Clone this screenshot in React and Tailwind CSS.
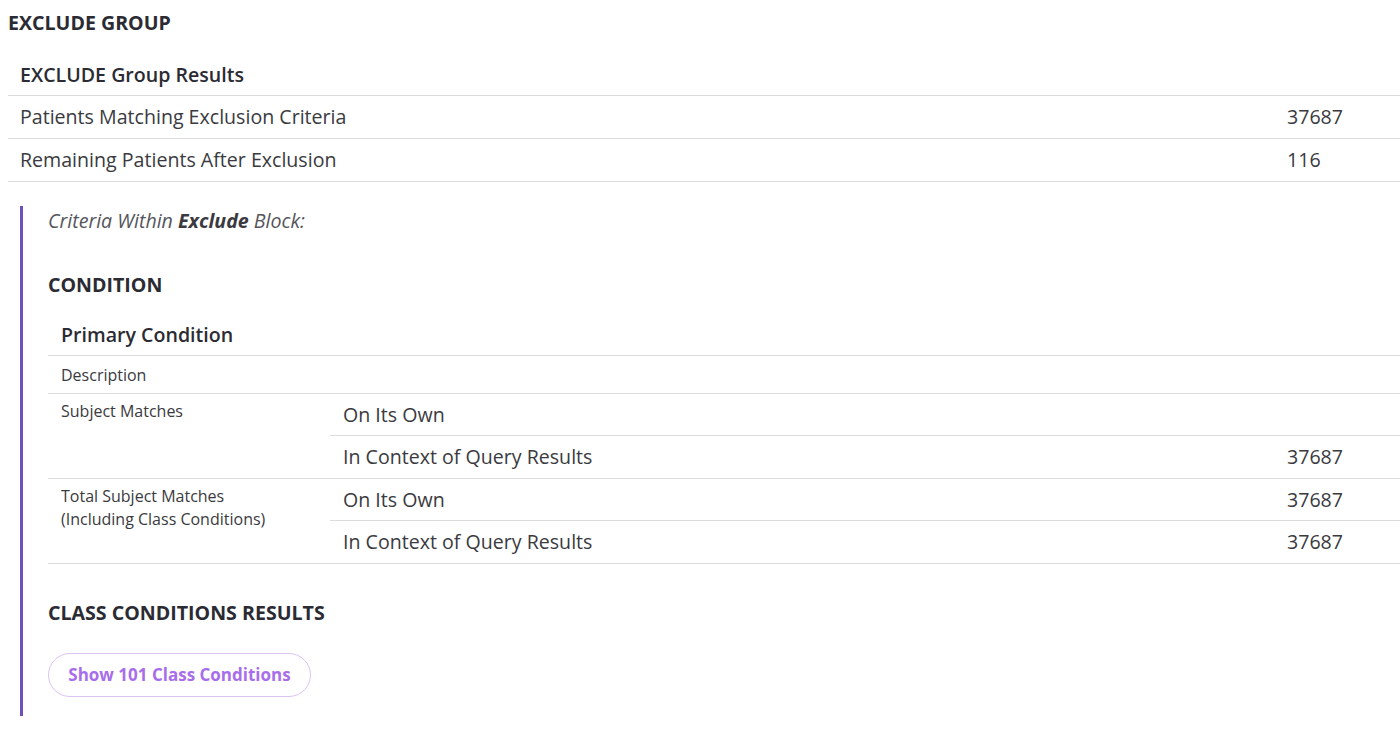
import React from "react";

const F = { fontFamily: '"Open Sans", "Liberation Sans", sans-serif' };

function Row({ label, value }) {
  return (
    <div className="flex items-center border-b border-[#dcdcdc] h-[43px]">
      <div className="flex-1 pl-3 text-[19.6px] text-[#3a3a40]">{label}</div>
      <div className="w-[125px] pl-3 text-[19.6px] text-[#3a3a40]">{value}</div>
    </div>
  );
}

function SubRow({ label, value, last }) {
  return (
    <div className={"flex items-center h-[42px] " + (last ? "" : "border-b border-[#dcdcdc]")}>
      <div className="flex-1 pl-[13px] text-[19.6px] text-[#3a3a40]">{label}</div>
      <div className="w-[126px] pl-[13px] text-[19.6px] text-[#3a3a40]">{value}</div>
    </div>
  );
}

export default function App() {
  return (
    <div style={F} className="bg-white w-[1400px] min-h-[732px] pl-2 pt-[9px] text-[#3a3a40]">
      <h2 className="text-[19.6px] font-bold leading-[28px] text-[#2b2b33]">EXCLUDE GROUP</h2>

      <div className="mt-[17px]">
        <div className="flex items-center border-b border-[#dcdcdc] h-[42px]">
          <div className="pl-3 text-[19.6px] font-semibold text-[#2b2b33]">EXCLUDE Group Results</div>
        </div>
        <Row label="Patients Matching Exclusion Criteria" value="37687" />
        <Row label="Remaining Patients After Exclusion" value="116" />
      </div>

      <div className="ml-3 mt-[24px] border-l-[3px] border-[#6e50bd] pl-[25px] pt-[2px] pb-[19px]">
        <p className="text-[19.6px] italic leading-[26px] text-[#55555c]">
          Criteria Within <span className="font-bold text-[#3a3a40]">Exclude</span> Block:
        </p>

        <h3 className="mt-[37px] text-[19.6px] font-bold leading-[28px] text-[#2b2b33]">CONDITION</h3>

        <div className="mt-[15px]">
          <div className="flex items-center border-b border-[#dcdcdc] h-[42px]">
            <div className="pl-[13px] text-[19.6px] font-semibold text-[#2b2b33]">Primary Condition</div>
          </div>
          <div className="flex items-center border-b border-[#dcdcdc] h-[38px]">
            <div className="pl-[13px] text-[16px] text-[#3a3a40]">Description</div>
          </div>
          <div className="flex border-b border-[#dcdcdc]">
            <div className="w-[282px] pl-[13px] pt-[6px] text-[16px] leading-[23px] text-[#3a3a40]">Subject Matches</div>
            <div className="flex-1">
              <SubRow label="On Its Own" value="" />
              <SubRow label="In Context of Query Results" value="37687" last />
            </div>
          </div>
          <div className="flex border-b border-[#dcdcdc]">
            <div className="w-[282px] pl-[13px] pt-[6px] text-[16px] leading-[23px] text-[#3a3a40]">
              Total Subject Matches
              <br />
              (Including Class Conditions)
            </div>
            <div className="flex-1">
              <SubRow label="On Its Own" value="37687" />
              <SubRow label="In Context of Query Results" value="37687" last />
            </div>
          </div>
        </div>

        <h3 className="mt-[35px] text-[19.6px] font-bold leading-[28px] text-[#2b2b33]">CLASS CONDITIONS RESULTS</h3>

        <button className="mt-[26px] h-[44px] w-[263px] rounded-full border border-[#dcc3f4] bg-white text-[17px] font-bold text-[#a86eea]">
          Show 101 Class Conditions
        </button>
      </div>
    </div>
  );
}
